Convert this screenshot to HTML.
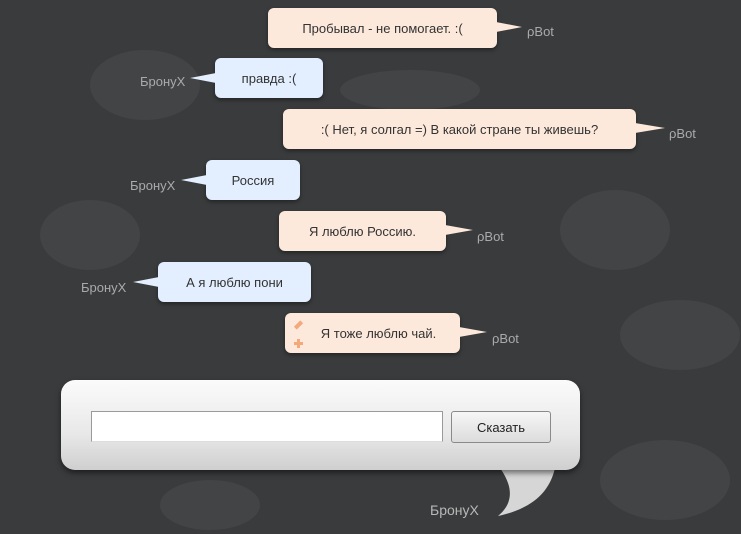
<!DOCTYPE html>
<html><head><meta charset="utf-8"><style>
*{margin:0;padding:0;box-sizing:border-box}
body{width:741px;height:534px;overflow:hidden;background:#3a3b3d;font-family:"Liberation Sans","DejaVu Sans",sans-serif;font-size:13px;position:relative}
.c{position:absolute;background:#434446;border-radius:50%}
.b{position:absolute;height:40px;border-radius:6px;color:#333;display:flex;align-items:center;justify-content:center;box-shadow:0 2px 4px rgba(0,0,0,.4)}
.bot{background:#fde9dc}
.usr{background:#e3efff}
.l{position:absolute;color:#a9aaac;font-size:13px}
.t{position:absolute;width:0;height:0}
</style></head><body>
<div class="c" style="left:90px;top:50px;width:110px;height:70px"></div>
<div class="c" style="left:40px;top:200px;width:100px;height:70px"></div>
<div class="c" style="left:560px;top:190px;width:110px;height:80px"></div>
<div class="c" style="left:620px;top:300px;width:120px;height:70px"></div>
<div class="c" style="left:340px;top:70px;width:140px;height:40px"></div>
<div class="c" style="left:600px;top:440px;width:130px;height:80px"></div>
<div class="c" style="left:160px;top:480px;width:100px;height:50px"></div>

<div class="b bot" style="left:268px;top:8px;width:229px">Пробывал - не помогает. :(</div>
<div class="t" style="left:496px;top:22px;border-top:5px solid transparent;border-bottom:5px solid transparent;border-left:26px solid #fde9dc"></div>
<div class="l" style="left:527px;top:24px">ρBot</div>

<div class="b usr" style="left:215px;top:58px;width:108px">правда :(</div>
<div class="t" style="left:190px;top:73px;border-top:5px solid transparent;border-bottom:5px solid transparent;border-right:26px solid #e3efff"></div>
<div class="l" style="left:140px;top:74px">БронуХ</div>

<div class="b bot" style="left:283px;top:109px;width:353px">:( Нет, я солгал =) В какой стране ты живешь?</div>
<div class="t" style="left:635px;top:123px;border-top:5px solid transparent;border-bottom:5px solid transparent;border-left:30px solid #fde9dc"></div>
<div class="l" style="left:669px;top:126px">ρBot</div>

<div class="b usr" style="left:206px;top:160px;width:94px">Россия</div>
<div class="t" style="left:181px;top:175px;border-top:5px solid transparent;border-bottom:5px solid transparent;border-right:26px solid #e3efff"></div>
<div class="l" style="left:130px;top:178px">БронуХ</div>

<div class="b bot" style="left:279px;top:211px;width:167px">Я люблю Россию.</div>
<div class="t" style="left:445px;top:225px;border-top:5px solid transparent;border-bottom:5px solid transparent;border-left:28px solid #fde9dc"></div>
<div class="l" style="left:477px;top:229px">ρBot</div>

<div class="b usr" style="left:158px;top:262px;width:153px">А я люблю пони</div>
<div class="t" style="left:133px;top:277px;border-top:5px solid transparent;border-bottom:5px solid transparent;border-right:26px solid #e3efff"></div>
<div class="l" style="left:81px;top:280px">БронуХ</div>

<div class="b bot" style="left:285px;top:313px;width:175px;padding-left:12px">Я тоже люблю чай.</div>
<div style="position:absolute;left:294px;top:323px;width:9px;height:4px;background:#f4a87c;transform:rotate(-45deg)"></div>
<div style="position:absolute;left:294px;top:342px;width:9px;height:3px;background:#f4a87c"></div>
<div style="position:absolute;left:297px;top:339px;width:3px;height:9px;background:#f4a87c"></div>
<div class="t" style="left:459px;top:327px;border-top:5px solid transparent;border-bottom:5px solid transparent;border-left:28px solid #fde9dc"></div>
<div class="l" style="left:492px;top:331px">ρBot</div>

<svg style="position:absolute;left:480px;top:460px" width="80" height="60"><path d="M20 8 C40 10 50 10 75 8 C70 30 55 48 18 56 C35 42 32 25 20 8Z" fill="#d6d6d6"/></svg>
<div style="position:absolute;left:61px;top:380px;width:519px;height:90px;border-radius:14px;background:linear-gradient(#fbfbfb,#e8e8e8 60%,#cfcfcf);box-shadow:0 3px 6px rgba(0,0,0,.5)"></div>
<div style="position:absolute;left:91px;top:411px;width:352px;height:31px;background:#fff;border:1px solid #9a9a9a;border-bottom-color:#ddd"></div>
<div style="position:absolute;left:451px;top:411px;width:100px;height:32px;border:1px solid #8a8a8a;border-radius:3px;background:linear-gradient(#f6f6f6,#dcdcdc);display:flex;align-items:center;justify-content:center;color:#222">Сказать</div>
<div class="l" style="left:430px;top:502px;color:#b8b8b8;font-size:14px">БронуХ</div>
</body></html>
